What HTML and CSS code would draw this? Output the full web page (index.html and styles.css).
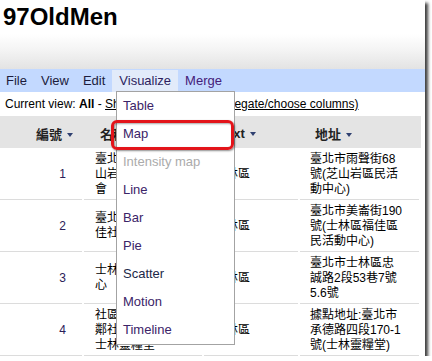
FILE: index.html
```html
<!DOCTYPE html>
<html>
<head>
<meta charset="utf-8">
<link rel="stylesheet" href="styles.css">
</head>
<body>
<div class="shot">
  <h1 class="title">97OldMen</h1>
  <div class="band"></div>
  <nav class="menubar">
    <span class="mi first">File</span>
    <span class="mi">View</span>
    <span class="mi">Edit</span>
    <span class="mi active">Visualize</span>
    <span class="mi merge">Merge</span>
  </nav>
  <div class="viewbar">Current view: <b>All</b> - <span class="link">Show all summary (aggregate/choose columns)</span></div>
  <table class="grid">
    <thead>
      <tr>
        <th class="c1">編號<i class="sort"></i></th>
        <th class="c2">名稱<i class="sort"></i></th>
        <th class="c3">Text<i class="sort"></i></th>
        <th class="c4">地址<i class="sort"></i></th>
      </tr>
    </thead>
    <tbody>
      <tr>
        <td class="c1 num">1</td>
        <td class="c2">臺北市士林區芝山岩社區發展協會</td>
        <td class="c3">士林區</td>
        <td class="c4">臺北市雨聲街68號(芝山岩區民活動中心)</td>
      </tr>
      <tr>
        <td class="c1 num">2</td>
        <td class="c2">臺北市士林區福佳社區發展協會</td>
        <td class="c3">士林區</td>
        <td class="c4">臺北市美崙街190號(士林區福佳區民活動中心)</td>
      </tr>
      <tr>
        <td class="c1 num">3</td>
        <td class="c2">士林忠誠活動中心</td>
        <td class="c3">士林區</td>
        <td class="c4">臺北市士林區忠誠路2段53巷7號5.6號</td>
      </tr>
      <tr>
        <td class="c1 num">4</td>
        <td class="c2">社區照顧關懷點鄰社區服務中心士林靈糧堂</td>
        <td class="c3">士林區</td>
        <td class="c4">據點地址:臺北市承德路四段170-1號(士林靈糧堂)</td>
      </tr>
    </tbody>
  </table>
  <ul class="dropdown">
    <li>Table</li>
    <li>Map</li>
    <li class="disabled">Intensity map</li>
    <li>Line</li>
    <li>Bar</li>
    <li>Pie</li>
    <li class="dark">Scatter</li>
    <li>Motion</li>
    <li>Timeline</li>
  </ul>
  <div class="callout"></div>
</div>
</body>
</html>
```

FILE: styles.css
```css
html, body {
  margin: 0;
  padding: 0;
  background: #ffffff;
}

body {
  font-family: "Liberation Sans", Arial, "Noto Sans CJK TC", sans-serif;
  color: #000;
}

.shot {
  position: relative;
  width: 425px;
  height: 356px;
  overflow: hidden;
  background: #fff;
  box-shadow: 3px 3px 3px rgba(0, 0, 0, 0.75);
}

.title {
  box-sizing: border-box;
  height: 34px;
  margin: 0;
  padding: 3px 0 0 3px;
  font-size: 24px;
  line-height: 28px;
  font-weight: 700;
  color: #000;
}

.band {
  height: 35px;
  background: linear-gradient(to bottom, #ffffff 0%, #f4f4f4 45%, #e3e3e3 100%);
}

.menubar {
  display: flex;
  height: 23px;
  background: #c3d9ff;
  font-size: 13px;
  line-height: 23px;
}

.mi {
  padding: 0 7px;
  color: #1c1c3c;
}

.mi.first {
  margin-left: -1px;
}

.mi.active {
  background: #e2ebfa;
  color: #2e1f5e;
  margin-top: 1px;
  line-height: 22px;
}

.mi.merge {
  color: #45207a;
}

.viewbar {
  height: 24px;
  line-height: 24px;
  padding-left: 5px;
  font-size: 12px;
  white-space: nowrap;
}

.viewbar .link {
  text-decoration: underline;
}

.grid {
  border-collapse: collapse;
  table-layout: fixed;
  width: 421px;
  font-family: "Liberation Sans", Arial, "Noto Sans CJK TC", sans-serif;
}

.grid th, .grid td {
  box-sizing: border-box;
  padding: 0;
  vertical-align: middle;
}

.grid thead tr {
  height: 32px;
  background: #e4e4e4;
}

.grid th {
  font-size: 13px;
  font-weight: 700;
  color: #222;
  text-align: left;
  padding-top: 3px;
  white-space: nowrap;
}

.grid th.c1 { width: 84px; text-align: right; padding-right: 11px; }
.grid th.c2 { width: 120px; padding-left: 16px; }
.grid th.c3 { width: 96px; padding-left: 15px; }
.grid th.c4 { width: 121px; padding-left: 15px; }

.sort {
  display: inline-block;
  width: 0;
  height: 0;
  margin-left: 5px;
  vertical-align: 2px;
  border-left: 3.5px solid transparent;
  border-right: 3.5px solid transparent;
  border-top: 4px solid #2f4070;
}

.grid tbody tr {
  height: 52px;
}

.grid td {
  font-size: 12px;
  line-height: 15px;
  background-image: linear-gradient(#dcdcdc, #dcdcdc);
  background-size: calc(100% - 2px) 1px;
  background-position: left bottom;
  background-repeat: no-repeat;
}

.grid td.c1 { text-align: right; padding-right: 18px; color: #2a2058; }
.grid td.c2 { padding-left: 11px; padding-right: 22px; }
.grid td.c3 { padding-left: 10px; }
.grid td.c4 { padding-left: 10px; padding-right: 17px; }

.dropdown {
  position: absolute;
  left: 116px;
  top: 91px;
  box-sizing: border-box;
  width: 119px;
  margin: 0;
  padding: 0;
  list-style: none;
  background: #fff;
  border: 1px solid #a3a3a3;
  font-size: 13px;
}

.dropdown li {
  height: 28px;
  line-height: 28px;
  padding-left: 6px;
  color: #3b2468;
}

.dropdown li.disabled {
  color: #ababab;
}

.dropdown li.dark {
  color: #1c2848;
}

.callout {
  position: absolute;
  left: 111px;
  top: 120px;
  box-sizing: border-box;
  width: 123px;
  height: 30px;
  border: 3px solid #e3141a;
  border-radius: 6px;
  box-shadow: 1px 1px 2px rgba(0, 0, 0, 0.45), inset 1px 1px 2px rgba(0, 0, 0, 0.35);
}
```
